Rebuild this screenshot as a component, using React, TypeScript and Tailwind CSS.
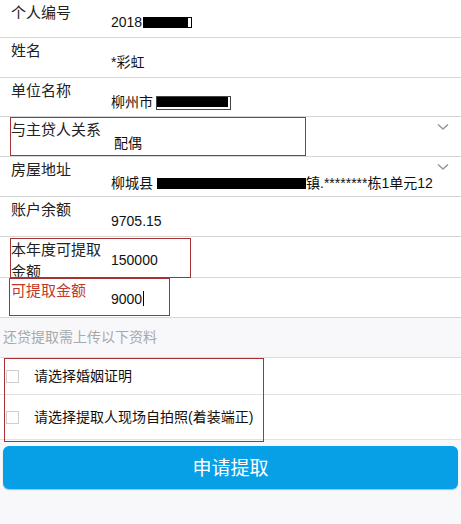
import React from "react";

const font = { fontFamily: '"Liberation Sans", "Noto Sans CJK SC", sans-serif' };

function Chevron() {
  return (
    <svg width="12" height="8" viewBox="0 0 12 8" className="absolute right-[12px] top-[6px]">
      <path d="M1 1.5 L6 6 L11 1.5" fill="none" stroke="#9a9a9a" strokeWidth="1.6" />
    </svg>
  );
}

function Row({
  label,
  children,
  h = "h-[40px]",
  labelClass = "text-[#222]",
  valueTop = "pt-[17px]",
  select = false,
}: {
  label: string;
  children: React.ReactNode;
  h?: string;
  labelClass?: string;
  valueTop?: string;
  select?: boolean;
}) {
  return (
    <div className={`relative flex ${h} border-b border-[#d6d6d6] bg-white`}>
      <div className={`w-[111px] shrink-0 pl-[11px] pr-[8px] pt-[2px] text-[15px] leading-[22px] ${labelClass}`}>{label}</div>
      <div className={`${valueTop} w-[326px] whitespace-nowrap text-[14px] leading-[18px] text-[#111]`}>{children}</div>
      {select && <Chevron />}
    </div>
  );
}

export default function App() {
  return (
    <div className="relative min-h-[524px] w-[461px] bg-[#f8f8fb]" style={font}>
      <Row label="个人编号" h="h-[38px]" valueTop="pt-[13px]">
        2018
        <span className="ml-[1px] inline-block h-[11px] w-[44px] bg-black align-[-1px]" />
        <span className="inline-block h-[11px] w-[5px] border border-black bg-white align-[-1px]" />
      </Row>
      <Row label="姓名" valueTop="pt-[15px]">*彩虹</Row>
      <Row label="单位名称" h="h-[39px]" valueTop="pt-[15px]">
        柳州市
        <span className="ml-[4px] inline-block h-[12px] w-[73px] border-b-2 border-r-2 border-white bg-black align-[-2px] outline outline-1 outline-[#444]" />
      </Row>
      <Row label="与主贷人关系" select>
        <span className="pl-[3px]">配偶</span>
      </Row>
      <Row label="房屋地址" select>
        柳城县
        <span className="ml-[4px] inline-block h-[11px] w-[149px] bg-black align-[-1px]" />
        镇.********栋1单元12
      </Row>
      <Row label="账户余额" valueTop="pt-[15px]">9705.15</Row>
      <Row label="本年度可提取金额" h="h-[41px]" valueTop="pt-[14px]">
        150000
      </Row>
      <Row label="可提取金额" labelClass="text-[#c0392b]" valueTop="pt-[12px]">
        9000<span className="ml-[1px] inline-block h-[15px] w-px bg-black align-[-2px]" />
      </Row>

      <div className="flex h-[40px] items-center border-b border-[#dcdce4] bg-[#f8f8fb] pl-[3px] text-[14px] text-[#a8a8a8]">
        还贷提取需上传以下资料
      </div>

      <div className="bg-white">
        <label className="flex h-[37px] items-center border-b border-[#e2e2e2] pl-[6px]">
          <span className="h-[13px] w-[13px] border border-[#cfcfcf] bg-white" />
          <span className="pl-[15px] text-[14px] text-[#111]">请选择婚姻证明</span>
        </label>
        <label className="flex h-[45px] items-center border-b border-[#f0dede] pl-[6px]">
          <span className="h-[13px] w-[13px] border border-[#cfcfcf] bg-white" />
          <span className="pl-[15px] text-[14px] text-[#111]">请选择提取人现场自拍照(着装端正)</span>
        </label>
      </div>

      <div className="px-[3px] pt-[6px]">
        <button className="flex h-[43px] w-[455px] items-center justify-center rounded-[6px] bg-[#07a0e6] pt-[3px] text-[19px] text-white shadow-[0_1px_1px_rgba(0,80,130,0.35)]">
          申请提取
        </button>
      </div>

      {/* red annotation boxes */}
      <div className="pointer-events-none absolute left-[10px] top-[117px] h-[39px] w-[296px] border-[1.5px] border-[#a83232]" />
      <div className="pointer-events-none absolute left-[10px] top-[238px] h-[40px] w-[181px] border-[1.5px] border-[#a83232]" />
      <div className="pointer-events-none absolute left-[9px] top-[278px] h-[38px] w-[161px] border-[1.5px] border-[#a83232]" />
      <div className="pointer-events-none absolute left-[4px] top-[358px] h-[84px] w-[260px] border-[1.5px] border-[#a83232]" />
    </div>
  );
}
